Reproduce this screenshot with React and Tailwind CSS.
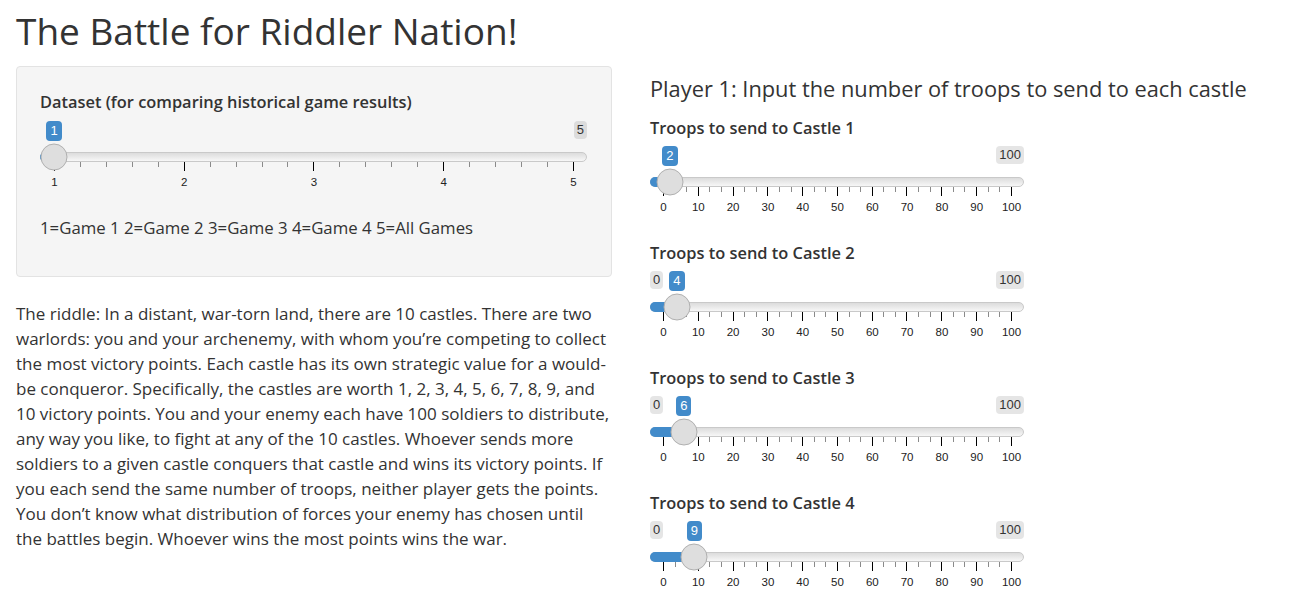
import React from "react";

const FONT = { fontFamily: '"Open Sans", "Noto Sans", sans-serif' };
const ARIAL = { fontFamily: '"Liberation Sans", Arial, sans-serif' };

function Slider({ min, max, value, width, pad, majors, minorPer, showMin, minLabel, maxLabel }) {
  const span = width - 2 * pad;
  const hx = pad + ((value - min) / (max - min)) * span;
  const tickCount = (majors.length - 1) * (minorPer + 1) + 1;
  const ticks = Array.from({ length: tickCount }, (_, i) => i % (minorPer + 1) === 0);
  return (
    <div className="flex flex-col pb-[4px]" style={{ width }}>
      {/* labels row */}
      <div className="relative flex h-[18px] items-start justify-between">
        <div
          className={
            showMin
              ? "rounded-[4px] bg-black/10 px-[3px] py-px text-[13px] leading-[16px] text-[#333]"
              : "invisible rounded-[4px] px-[3px] py-px text-[13px] leading-[16px]"
          }
          style={ARIAL}
        >
          {minLabel}
        </div>
        <div
          className="rounded-[4px] bg-black/10 px-[3px] py-px text-[13px] leading-[16px] text-[#333]"
          style={ARIAL}
        >
          {maxLabel}
        </div>
        <div
          className="absolute top-0 flex w-[40px] -translate-x-1/2 justify-center"
          style={{ left: hx }}
        >
          <div
            className="rounded-[4px] bg-[#428bca] px-[4px] py-[2px] text-[13px] leading-[16px] text-white"
            style={ARIAL}
          >
            {value}
          </div>
        </div>
      </div>
      {/* track */}
      <div className="relative mt-[13px] h-[10px] rounded-full border border-[#c9c9c9] bg-gradient-to-b from-[#dcdcdc] to-[#f7f7f7]">
        <div
          className="absolute -left-px -top-px h-[10px] rounded-l-full bg-[#428bca]"
          style={{ width: hx }}
        />
        <div
          className="absolute top-1/2 h-[27px] w-[27px] -translate-x-1/2 -translate-y-1/2 rounded-full border border-[#b0b0b0] bg-[#dedede]"
          style={{ left: hx - 1 }}
        />
      </div>
      {/* ticks */}
      <div className="flex items-start justify-between" style={{ paddingLeft: pad, paddingRight: pad - 1 }}>
        {ticks.map((major, i) => (
          <div
            key={i}
            className={major ? "h-[9px] w-px bg-black" : "h-[5px] w-px bg-[#8a8a8a]"}
          />
        ))}
      </div>
      {/* numbers */}
      <div
        className="mt-[5px] flex justify-between text-[11.5px] leading-[13px] text-[#222]"
        style={{ ...ARIAL, paddingLeft: pad, paddingRight: pad - 1 }}
      >
        {majors.map((m) => (
          <div key={m} className="flex w-px justify-center">
            <span className="whitespace-nowrap">{m}</span>
          </div>
        ))}
      </div>
    </div>
  );
}

const castles = [
  { n: 1, v: 2, showMin: false },
  { n: 2, v: 4, showMin: true },
  { n: 3, v: 6, showMin: true },
  { n: 4, v: 9, showMin: true },
];

const lines = [
  "The riddle: In a distant, war-torn land, there are 10 castles. There are two",
  "warlords: you and your archenemy, with whom you\u2019re competing to collect",
  "the most victory points. Each castle has its own strategic value for a would-",
  "be conqueror. Specifically, the castles are worth 1, 2, 3, 4, 5, 6, 7, 8, 9, and",
  "10 victory points. You and your enemy each have 100 soldiers to distribute,",
  "any way you like, to fight at any of the 10 castles. Whoever sends more",
  "soldiers to a given castle conquers that castle and wins its victory points. If",
  "you each send the same number of troops, neither player gets the points.",
  "You don\u2019t know what distribution of forces your enemy has chosen until",
  "the battles begin. Whoever wins the most points wins the war.",
];

export default function App() {
  return (
    <div className="min-h-[612px] bg-white px-[16px] text-[#333]" style={FONT}>
      <h2 className="pt-[11px] mb-[15px] text-[37px] leading-[40px] font-normal text-[#333]">
        The Battle for Riddler Nation!
      </h2>
      <div className="flex">
        <div className="flex w-[596px] shrink-0 flex-col">
          <div className="flex h-[211px] flex-col rounded-[4px] border border-[#e3e3e3] bg-[#f5f5f5] pl-[23px] pt-[25px]">
            <div className="text-[16.4px] leading-[20px] font-semibold text-[#333]">
              Dataset (for comparing historical game results)
            </div>
            <div className="mt-[9px]">
              <Slider
                min={1}
                max={5}
                value={1}
                width={547}
                pad={14}
                majors={[1, 2, 3, 4, 5]}
                minorPer={4}
                showMin={false}
                minLabel="1"
                maxLabel="5"
              />
            </div>
            <div className="mt-[24px] text-[16.8px] leading-[22px]">
              1=Game 1 2=Game 2 3=Game 3 4=Game 4 5=All Games
            </div>
          </div>
          <div className="mt-[24px] text-[17px] leading-[25px]">
            {lines.map((l, i) => (
              <div key={i} className="whitespace-nowrap">
                {l}
              </div>
            ))}
          </div>
        </div>
        <div className="ml-[38px] flex flex-col pt-[9px]">
          <h3 className="text-[21.8px] leading-[28px] font-normal text-[#333]">
            Player 1: Input the number of troops to send to each castle
          </h3>
          <div className="mt-[15px] flex flex-col gap-[25px]">
            {castles.map((c) => (
              <div key={c.n} className="flex flex-col gap-[8px]">
                <div className="text-[16.4px] leading-[20px] font-semibold text-[#333]">
                  Troops to send to Castle {c.n}
                </div>
                <Slider
                  min={0}
                  max={100}
                  value={c.v}
                  width={374}
                  pad={13}
                  majors={[0, 10, 20, 30, 40, 50, 60, 70, 80, 90, 100]}
                  minorPer={2}
                  showMin={c.showMin}
                  minLabel="0"
                  maxLabel="100"
                />
              </div>
            ))}
          </div>
        </div>
      </div>
    </div>
  );
}
